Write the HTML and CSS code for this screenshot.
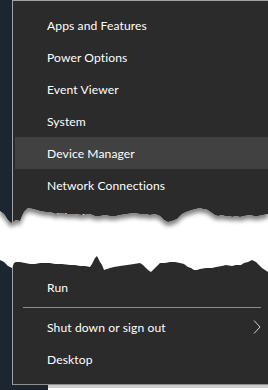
FILE: index.html
```html
<!DOCTYPE html>
<html lang="en">
<head>
    <meta charset="UTF-8">
    <meta name="viewport" content="width=device-width, initial-scale=1.0">
    <title>Quick Link menu</title>
    <link rel="stylesheet" href="styles.css">
</head>
<body>
    <div class="screen">
        <div class="desktop-row">
            <div class="menu">
                <div class="menu-item">Apps and Features</div>
                <div class="menu-item">Power Options</div>
                <div class="menu-item">Event Viewer</div>
                <div class="menu-item">System</div>
                <div class="menu-item active">Device Manager</div>
                <div class="menu-item">Network Connections</div>
                <div class="menu-item cut">Disk Management</div>
                <div class="menu-gap"></div>
                <div class="menu-item">Run</div>
                <div class="separator"></div>
                <div class="menu-item">
                    <span>Shut down or sign out</span>
                    <svg class="chevron" width="8" height="14" viewBox="0 0 8 14">
                        <polyline points="1,0.5 7,7 1,13.5" fill="none" stroke="#cfcfcf" stroke-width="1"/>
                    </svg>
                </div>
                <div class="menu-item">Desktop</div>
            </div>
        </div>
        <div class="taskbar">
            <div class="taskbar-left"></div>
            <div class="taskbar-right"></div>
        </div>

        <!-- torn paper cut over the middle of the menu -->
        <svg class="tear" width="268" height="90" viewBox="0 190 268 90">
            <defs>
                <clipPath id="paper">
                    <polygon id="paperShape" points="0,211 4,214 8,220 11,223 13,222 16,220 20,221 22,216 24,212 28,208 33,209 40,211 46,212 50,212 56,214 60,213 66,214 75,214 82,215 90,214 95,216 100,216 105,215 110,216 116,216 120,215 127,214 134,213 140,214 145,214 150,215 155,214 160,216 164,220 168,222 172,221 177,219 180,216 182,214 186,212 189,211 192,210 196,209 200,208 203,209 206,209 209,211 212,213 215,215 218,216 222,215 225,216 230,216 232,217 236,216 240,217 244,216 250,215 254,216 258,216 263,215 268,214 268,272 265,270 262,268 259,265 256,262 252,260 248,262 244,263 241,265 236,265 232,266 226,265 222,266 216,267 212,268 206,268 200,269 197,270 194,270 191,268 188,267 184,264 180,263 175,262 170,262 165,263 160,263 157,266 155,268 151,272 148,270 146,268 143,265 140,263 134,264 127,265 120,266 114,267 110,268 107,269 104,270 102,265 100,262 98,258 97,256 95,258 94,260 92,264 90,267 85,266 80,266 75,265 70,265 62,264 55,264 50,263 45,263 40,263 35,264 30,264 25,263 20,262 16,262 14,263 12,268 10,267 8,266 6,264 4,262 0,260"/>
                </clipPath>
                <filter id="soft" x="-10%" y="-50%" width="120%" height="200%">
                    <feGaussianBlur stdDeviation="2.2"/>
                </filter>
            </defs>
            <use href="#paperShape" fill="#ffffff"/>
            <g clip-path="url(#paper)">
                <polygon filter="url(#soft)" fill="#5a5a5a" opacity="0.75" transform="translate(0,4)" points="0,180 268,180 268,214 263,215 258,216 254,216 250,215 244,216 240,217 236,216 232,217 230,216 225,216 222,215 218,216 215,215 212,213 209,211 206,209 203,209 200,208 196,209 192,210 189,211 186,212 182,214 180,216 177,219 172,221 168,222 164,220 160,216 155,214 150,215 145,214 140,214 134,213 127,214 120,215 116,216 110,216 105,215 100,216 95,216 90,214 82,215 75,214 66,214 60,213 56,214 50,212 46,212 40,211 33,209 28,208 24,212 22,216 20,221 16,220 13,222 11,223 8,220 4,214 0,211"/>
            </g>
        </svg>
    </div>
</body>
</html>
```

FILE: styles.css
```css
html, body {
    margin: 0;
    padding: 0;
}
body {
    width: 268px;
    height: 390px;
    overflow: hidden;
    background-color: #ffffff;
    font-family: Lato, "Liberation Sans", sans-serif;
}
.screen {
    position: relative;
    width: 268px;
    height: 390px;
    background-color: #1c2530;
}
.desktop-row {
    padding-left: 12px;
}
.menu {
    background-color: #2b2b2b;
    border-top: 1px solid #a3a3a3;
    border-left: 1px solid #a3a3a3;
    border-bottom: 1px solid #8f8f8f;
    padding: 8px 0 9px 2px;
    color: #ffffff;
    font-size: 12.1px;
    letter-spacing: 0.1px;
}
.menu-item {
    display: flex;
    align-items: center;
    height: 32px;
    padding-left: 32px;
    white-space: nowrap;
}
.menu-item.active {
    background-color: #414141;
}
.menu-item.cut {
    padding-top: 1px;
    height: 31px;
}
.menu-gap {
    height: 38px;
}
.separator {
    height: 8px;
    display: flex;
    align-items: center;
    padding: 0 7px 0 8px;
}
.separator::before {
    content: "";
    flex: 1;
    height: 1px;
    background-color: #8a8a8a;
}
.chevron {
    margin-left: auto;
    margin-right: 7px;
}
.taskbar {
    display: flex;
    height: 5px;
}
.taskbar-left {
    width: 48px;
    background-color: #1c2530;
}
.taskbar-right {
    flex: 1;
    background: linear-gradient(#cbcbcb 0, #cbcbcb 3px, #ffffff 3px);
}
.tear {
    position: absolute;
    left: 0;
    top: 190px;
}
```
